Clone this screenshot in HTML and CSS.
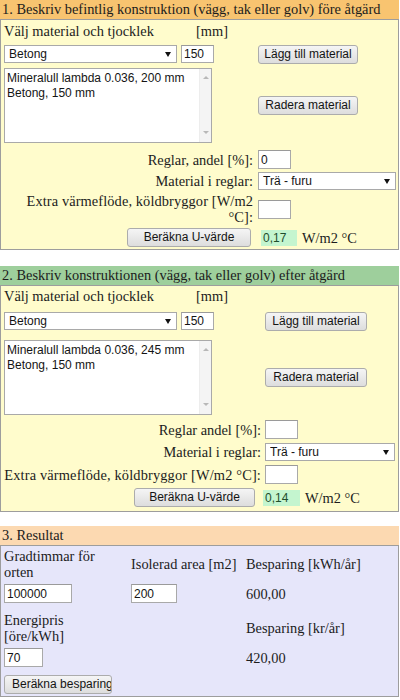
FILE: index.html
```html
<!DOCTYPE html>
<html lang="sv">
<head>
<meta charset="utf-8">
<title>U-värde och besparing</title>
<link rel="stylesheet" href="styles.css">
</head>
<body>
<section class="sec sec-one">
  <h2 class="head head-orange">1. Beskriv befintlig konstruktion (vägg, tak eller golv) före åtgärd</h2>
  <div class="box box-yellow">
    <div class="mat-head"><span>Välj material och tjocklek</span><span>[mm]</span></div>
    <div class="mat-row">
      <div class="mat-left">
        <span class="select-wrap sel-mat"><select class="select"><option>Betong</option></select></span>
        <input class="field f-mm" value="150">
      </div>
      <button class="btn btn-mat">Lägg till material</button>
    </div>
    <div class="mat-row mat-row-list">
      <div class="mat-left">
        <div class="list">
          <textarea class="list-text" readonly>Mineralull lambda 0.036, 200 mm
Betong, 150 mm</textarea>
          <div class="scroll"><span class="arr arr-up"></span><span class="arr arr-down"></span></div>
        </div>
      </div>
      <button class="btn btn-mat">Radera material</button>
    </div>
    <div class="params">
      <label class="lbl">Reglar, andel [%]:</label>
      <div class="ctl"><input class="field f-small" value="0"></div>
      <label class="lbl">Material i reglar:</label>
      <div class="ctl"><span class="select-wrap sel-wood"><select class="select"><option>Trä - furu</option></select></span></div>
      <label class="lbl lbl-extra">Extra värmeflöde, köldbryggor [W/m2 °C]:</label>
      <div class="ctl"><input class="field f-small" value=""></div>
      <div class="lbl"><button class="btn btn-calc">Beräkna U-värde</button></div>
      <div class="ctl result"><span class="out">0,17</span><span class="unit">W/m2 °C</span></div>
    </div>
  </div>
</section>

<section class="sec sec-two">
  <h2 class="head head-green">2. Beskriv konstruktionen (vägg, tak eller golv) efter åtgärd</h2>
  <div class="box box-yellow">
    <div class="mat-head"><span>Välj material och tjocklek</span><span>[mm]</span></div>
    <div class="mat-row">
      <div class="mat-left">
        <span class="select-wrap sel-mat"><select class="select"><option>Betong</option></select></span>
        <input class="field f-mm" value="150">
      </div>
      <button class="btn btn-mat">Lägg till material</button>
    </div>
    <div class="mat-row mat-row-list">
      <div class="mat-left">
        <div class="list">
          <textarea class="list-text" readonly>Mineralull lambda 0.036, 245 mm
Betong, 150 mm</textarea>
          <div class="scroll"><span class="arr arr-up"></span><span class="arr arr-down"></span></div>
        </div>
      </div>
      <button class="btn btn-mat">Radera material</button>
    </div>
    <div class="params">
      <label class="lbl">Reglar andel [%]:</label>
      <div class="ctl"><input class="field f-small" value=""></div>
      <label class="lbl">Material i reglar:</label>
      <div class="ctl"><span class="select-wrap sel-wood"><select class="select"><option>Trä - furu</option></select></span></div>
      <label class="lbl lbl-extra">Extra värmeflöde, köldbryggor [W/m2 °C]:</label>
      <div class="ctl"><input class="field f-small" value=""></div>
      <div class="lbl"><button class="btn btn-calc">Beräkna U-värde</button></div>
      <div class="ctl result"><span class="out">0,14</span><span class="unit">W/m2 °C</span></div>
    </div>
  </div>
</section>

<section class="sec sec-three">
  <h2 class="head head-peach">3. Resultat</h2>
  <div class="box box-lavender">
    <div class="results">
      <div class="cell">Gradtimmar för orten</div>
      <div class="cell">Isolerad area [m2]</div>
      <div class="cell">Besparing [kWh/år]</div>

      <div class="cell"><input class="field f-deg" value="100000"></div>
      <div class="cell"><input class="field f-area" value="200"></div>
      <div class="cell">600,00</div>

      <div class="cell spaced">Energipris [öre/kWh]</div>
      <div class="cell spaced"></div>
      <div class="cell spaced">Besparing [kr/år]</div>

      <div class="cell"><input class="field f-price" value="70"></div>
      <div class="cell"></div>
      <div class="cell">420,00</div>

      <div class="cell spaced-btn"><button class="btn btn-save">Beräkna besparing</button></div>
    </div>
  </div>
</section>
</body>
</html>
```

FILE: styles.css
```css
* {
  box-sizing: border-box;
}

body {
  margin: 0;
  width: 399px;
  background: #ffffff;
  color: #1c1c1c;
  font-family: "Liberation Serif", "Times New Roman", serif;
  font-size: 14.4px;
  line-height: 16px;
}

.sec-two {
  margin-top: 16px;
}

.sec-three {
  margin-top: 14px;
}

.head {
  margin: 0;
  height: 19px;
  padding: 0 2px;
  font-size: 14.4px;
  font-weight: normal;
  line-height: 19px;
  white-space: nowrap;
}

.head-orange {
  background: #f8c470;
}

.head-green {
  background: #9ecf9c;
}

.head-peach {
  background: #fcd9b1;
}

.box {
  border: 1px solid #9d9d9d;
  padding: 3px 3px 2px 3px;
}

.box-yellow {
  background: #fffccc;
}

.box-lavender {
  background: #e6e6fa;
  padding-top: 2px;
}

.sec-two .box {
  padding-top: 2px;
  padding-bottom: 4px;
}

/* ---------- material chooser ---------- */

.mat-head {
  display: grid;
  grid-template-columns: 192px auto;
  margin-bottom: 6px;
}

.sec-two .mat-head {
  margin-bottom: 8px;
}

.mat-row {
  display: flex;
  align-items: flex-start;
  margin-bottom: 4px;
}

.sec-two .mat-row {
  margin-bottom: 9px;
}

.mat-row-list {
  align-items: center;
  margin-bottom: 0;
}

.sec-two .mat-row-list {
  margin-bottom: 0;
}

.mat-left {
  display: flex;
  align-items: flex-start;
  width: 254px;
  flex: none;
}

.sec-two .mat-left {
  width: 261px;
}

/* ---------- controls ---------- */

.field,
.select,
.btn,
.list-text,
.out {
  font-family: "Liberation Sans", Arial, sans-serif;
  font-size: 12px;
  color: #141414;
}

.field {
  height: 19px;
  margin: 0;
  padding: 0 2px;
  border: 1px solid #a9a9a9;
  border-top-color: #9a9a9a;
  border-radius: 0;
  background: #ffffff;
  outline: none;
}

.f-mm {
  width: 33px;
  height: 18px;
  margin-left: 4px;
}

.f-small {
  width: 33px;
}

.f-deg {
  width: 68px;
}

.f-area {
  width: 46px;
}

.f-price {
  width: 39px;
}

.select-wrap {
  position: relative;
  display: inline-block;
}

.select-wrap::after {
  content: "";
  position: absolute;
  right: 6px;
  top: 7px;
  border-left: 3.5px solid transparent;
  border-right: 3.5px solid transparent;
  border-top: 5px solid #111111;
  pointer-events: none;
}

.select {
  -webkit-appearance: none;
  appearance: none;
  display: block;
  height: 18px;
  margin: 0;
  padding: 0 0 0 4px;
  border: 1px solid #a9a9a9;
  border-radius: 0;
  background: #ffffff;
  outline: none;
}

.sel-mat .select {
  width: 173px;
}

.sel-wood .select {
  width: 138px;
}

.sec-two .sel-wood .select {
  width: 130px;
}

.btn {
  height: 19px;
  margin: 0;
  padding: 0 5px;
  border: 1px solid #acacac;
  border-radius: 3px;
  background: linear-gradient(#f5f5f5, #dddddd);
  line-height: 17px;
  white-space: nowrap;
  cursor: default;
}

.btn-mat {
  width: 100px;
}

.sec-two .btn-mat {
  width: 102px;
}

.btn-calc {
  width: 124px;
  margin-right: 2px;
}

.sec-two .btn-calc {
  width: 121px;
  margin-right: 6px;
}

.btn-save {
  width: 108px;
  padding-left: 7px;
  text-align: left;
  overflow: hidden;
}

/* ---------- list box ---------- */

.list {
  display: flex;
  width: 208px;
  height: 75px;
  border: 1px solid #a9a9a9;
  background: #ffffff;
}

.list-text {
  flex: 1;
  min-width: 0;
  margin: 0;
  padding: 2px;
  border: 0;
  background: transparent;
  line-height: 15px;
  resize: none;
  overflow: hidden;
  outline: none;
}

.scroll {
  width: 12px;
  flex: none;
  display: flex;
  flex-direction: column;
  justify-content: space-between;
  align-items: center;
  padding: 7px 0 8px;
  background: #f4f4f4;
  border-left: 1px solid #ededed;
}

.arr {
  width: 0;
  height: 0;
  border-left: 3px solid transparent;
  border-right: 3px solid transparent;
}

.arr-up {
  border-bottom: 3px solid #b8b8b8;
}

.arr-down {
  border-top: 3px solid #b8b8b8;
}

/* ---------- parameter grid ---------- */

.params {
  display: grid;
  grid-template-columns: 249px 1fr;
  column-gap: 5px;
  row-gap: 3px;
  align-items: center;
  margin-top: 7px;
}

.sec-one .lbl-extra {
  letter-spacing: 0.1px;
}

.sec-two .params {
  grid-template-columns: 257px 1fr;
  column-gap: 4px;
  row-gap: 4px;
  margin-top: 5px;
}

.sec-two .lbl {
  white-space: nowrap;
}

.sec-two .lbl-extra {
  letter-spacing: 0.15px;
}

.lbl {
  display: block;
  text-align: right;
}

.ctl {
  display: flex;
  align-items: center;
}

.result {
  gap: 5px;
}

.out {
  display: inline-block;
  width: 36px;
  height: 16px;
  margin-left: 3px;
  padding-left: 2px;
  background: #c4f5cf;
  color: #1f4d2c;
  line-height: 16px;
}

.sec-two .out {
  width: 37px;
  margin-left: -2px;
}

/* ---------- results ---------- */

.results {
  display: grid;
  grid-template-columns: 122px 110px 1fr;
  column-gap: 5px;
  row-gap: 4px;
  align-items: center;
}

.spaced {
  margin-top: 5px;
}

.spaced-btn {
  margin-top: 4px;
}
```
